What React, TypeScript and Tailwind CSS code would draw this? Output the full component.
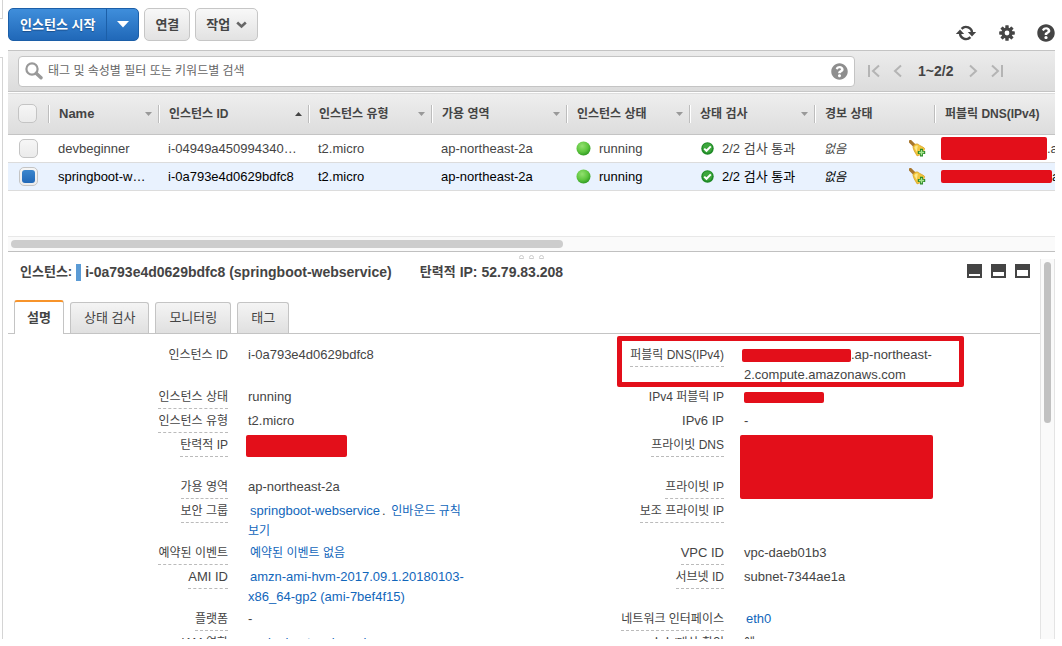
import { useState } from "react";
import type { ReactNode } from "react";
import { FaQuestionCircle } from "react-icons/fa";

type Instance = {
  name: string;
  id: string;
  type: string;
  zone: string;
  dns: ReactNode;
};

const INSTANCES: Instance[] = [
  {
    name: "devbeginner",
    id: "i-04949a450994340…",
    type: "t2.micro",
    zone: "ap-northeast-2a",
    dns: (
      <>
        <Redacted className="h-[23px] w-[106px]" />
        .ap
      </>
    ),
  },
  {
    name: "springboot-webservice",
    id: "i-0a793e4d0629bdfc8",
    type: "t2.micro",
    zone: "ap-northeast-2a",
    dns: (
      <>
        <Redacted className="h-[13px] w-[111px]" />
        ap
      </>
    ),
  },
];

const COLUMNS: { label: string; width: string; size: string; sort?: "asc" | "none" }[] = [
  { label: "Name", width: "w-[110px]", size: "text-[13px]", sort: "none" },
  { label: "인스턴스 ID", width: "w-[150px]", size: "text-xs", sort: "asc" },
  { label: "인스턴스 유형", width: "w-[123px]", size: "text-xs", sort: "none" },
  { label: "가용 영역", width: "w-[135px]", size: "text-xs", sort: "none" },
  { label: "인스턴스 상태", width: "w-[123px]", size: "text-xs", sort: "none" },
  { label: "상태 검사", width: "w-[125px]", size: "text-xs", sort: "none" },
  { label: "경보 상태", width: "w-[120px]", size: "text-xs" },
  { label: "퍼블릭 DNS(IPv4)", width: "w-auto", size: "text-xs" },
];

const TABS = ["설명", "상태 검사", "모니터링", "태그"];

function Redacted({ className }: { className: string }) {
  return <span className={`inline-block shrink-0 rounded-[2px] bg-[#e30f1a] align-middle ${className}`} />;
}

function RefreshIcon() {
  return (
    <svg width="22" height="18" viewBox="0 0 22 18" fill="none">
      <path d="M6.6 4.900A6 6 0 0 1 17 9.200" stroke="#444" strokeWidth="2.400" />
      <path d="M15.400 13.100A6 6 0 0 1 5 8.800" stroke="#444" strokeWidth="2.400" />
      <path d="M.8 10 5 5.600 9.200 10Z" fill="#444" />
      <path d="M12.800 8 17 12.400 21.200 8Z" fill="#444" />
    </svg>
  );
}

function GearIcon() {
  return (
    <svg width="16" height="16" viewBox="-8 -8 16 16">
      {[0, 45, 90, 135].map((angle) => (
        <rect key={angle} x="-1.7" y="-7.8" width="3.4" height="15.6" rx=".6" fill="#444" transform={`rotate(${angle})`} />
      ))}
      <circle r="5.6" fill="#444" />
      <circle r="2.4" fill="#fff" />
    </svg>
  );
}

function SearchIcon() {
  return (
    <svg width="18" height="18" viewBox="0 0 18 18" fill="none" stroke="#999">
      <circle cx="7" cy="7" r="5.6" strokeWidth="2.2" />
      <path d="m11.4 11.4 4.6 4.4" strokeWidth="3.4" strokeLinecap="round" />
    </svg>
  );
}

function PageIcon({ bar, flip }: { bar?: boolean; flip?: boolean }) {
  return (
    <svg
      width={bar ? 12 : 9}
      height="14"
      viewBox={bar ? "0 0 12 14" : "3 0 9 14"}
      fill="none"
      stroke="#b4b4b4"
      strokeWidth="2"
      className={flip ? "rotate-180" : ""}
    >
      {bar && <path d="M1 1v12" />}
      <path d="m11 1.5-6 5.5 6 5.5" />
    </svg>
  );
}

function RunningIcon() {
  return (
    <svg width="15" height="15" viewBox="0 0 15 15" className="shrink-0">
      <defs>
        <radialGradient id="ball" cx=".4" cy=".32" r=".7">
          <stop offset="0" stopColor="#93e070" />
          <stop offset=".6" stopColor="#5fc63f" />
          <stop offset="1" stopColor="#2f9a22" />
        </radialGradient>
      </defs>
      <circle cx="7.5" cy="7.5" r="7" fill="url(#ball)" />
    </svg>
  );
}

function PassedIcon() {
  return (
    <svg width="13" height="13" viewBox="0 0 13 13" className="shrink-0">
      <circle cx="6.5" cy="6.5" r="6.2" fill="#1f8a27" />
      <circle cx="6.5" cy="6" r="4.8" fill="#3da63c" />
      <path d="m3.2 6.6 2.3 2.2 4.3-4.4" fill="none" stroke="#fff" strokeWidth="2" />
    </svg>
  );
}

function AlarmIcon() {
  return (
    <svg width="17" height="17" viewBox="0 0 17 17" className="shrink-0">
      <path d="M1.400 1.600 5.200 5.400" stroke="#a8762c" strokeWidth="3.400" strokeLinecap="round" />
      <path
        d="M4 7.200C4.400 4.800 7.200 3.200 9.400 4.400C10.800 6 13.600 6.400 15.600 8.400C15 12 11.600 15.400 8 15.800C7 13.400 4.600 11 4 7.200Z"
        fill="#f3c63d"
        stroke="#d79f22"
        strokeWidth=".8"
      />
      <path d="M5.400 7.800C6 6 7.600 5.200 8.800 5.800L7.800 12Z" fill="#fde88c" />
      <path d="M11 8.800h3v2.200h2.200v3h-2.200v2.400H11v-2.400H8.800v-3H11Z" fill="#2f8a2b" />
      <path d="M12.500 10v5.200M10 12.500h5.100" stroke="#a5e58c" strokeWidth="1.300" />
    </svg>
  );
}

function PaneIcon({ top }: { top: number }) {
  return (
    <svg width="15" height="14" viewBox="0 0 15 14">
      <path d="M0 0h15v14H0Z" fill="#444" />
      <path d={`M2 ${top}h11V12H2Z`} fill="#fff" />
    </svg>
  );
}

function CheckBox({ label, checked, onChange }: { label: string; checked?: boolean; onChange?: () => void }) {
  return (
    <label className="grid size-[19px] place-items-center">
      <input
        type="checkbox"
        aria-label={label}
        checked={checked ?? false}
        onChange={onChange}
        className="peer col-start-1 row-start-1 size-[19px] appearance-none rounded-[5px] border border-[#c4c4c4] bg-linear-to-b from-[#f6f6f6] to-[#ebebeb]"
      />
      <span className="pointer-events-none col-start-1 row-start-1 hidden size-[13px] rounded-[3px] bg-linear-to-b from-[#3b86cd] to-[#2068b8] peer-checked:block" />
    </label>
  );
}

function Label({ children, plain, latin }: { children: ReactNode; plain?: boolean; latin?: boolean }) {
  return (
    <dt className="text-right">
      <span
        className={`inline-block h-[22px] align-top leading-5 whitespace-nowrap ${latin ? "text-[13px]" : "text-xs"} ${
          plain ? "" : "border-b border-dashed border-[#bbb]"
        }`}
      >
        {children}
      </span>
    </dt>
  );
}

function Link({ children, korean }: { children: ReactNode; korean?: boolean }) {
  return (
    <a href="#" className={`px-0.5 text-[#1166bb] hover:underline ${korean ? "text-xs leading-5" : ""}`}>
      {children}
    </a>
  );
}

function Toolbar() {
  const grey =
    "flex h-[33px] items-center rounded-[5px] border border-[#c6c6c6] bg-linear-to-b from-[#f8f8f8] to-[#e2e2e2] px-2.5";
  return (
    <div className="flex h-[50px] items-start pt-2 text-[13px] font-bold">
      <div className="flex h-[33px] rounded-[5px] border border-[#1c5fa8] bg-linear-to-b from-[#3f8edb] to-[#2068b8] text-white">
        <button className="px-[11px] text-shadow-[0_1px_1px_#1a4f8c]">인스턴스 시작</button>
        <button aria-label="시작 옵션" className="grid w-8 place-items-center border-l border-[#1c5fa8]">
          <svg width="12" height="7" viewBox="0 0 12 7">
            <path d="M0 0h12L6 6.500Z" fill="#fff" />
          </svg>
        </button>
      </div>
      <button className={`${grey} ml-[5px]`}>연결</button>
      <button className={`${grey} ml-[5px] gap-1.5`}>
        작업
        <svg width="11" height="8" viewBox="0 0 11 8" fill="none" stroke="#666" strokeWidth="2.600">
          <path d="m1.200 1.500 4.300 4 4.300-4" />
        </svg>
      </button>
      <div className="ml-auto flex items-center gap-[22px] pt-4">
        <button aria-label="새로 고침">
          <RefreshIcon />
        </button>
        <button aria-label="설정">
          <GearIcon />
        </button>
        <button aria-label="도움말">
          <FaQuestionCircle size={18} color="#444" />
        </button>
      </div>
    </div>
  );
}

function FilterBar() {
  return (
    <div className="flex h-[42px] items-center border-y border-[#c4c4c4] bg-linear-to-b from-[#ececec] to-[#dcdcdc] pl-2.5">
      <div className="flex h-[31px] flex-1 items-center gap-[5px] rounded-[4px] border border-[#c4c4c4] bg-white px-1.5">
        <SearchIcon />
        <input
          aria-label="필터"
          placeholder="태그 및 속성별 필터 또는 키워드별 검색"
          className="min-w-0 flex-1 text-xs outline-none placeholder:text-[#666]"
        />
        <FaQuestionCircle size={17} color="#8e8e8e" />
      </div>
      <div className="flex w-[200px] items-center pl-[13px] text-sm font-bold">
        <button aria-label="처음">
          <PageIcon bar />
        </button>
        <button aria-label="이전" className="ml-[13px]">
          <PageIcon />
        </button>
        <span className="mx-4">1~2/2</span>
        <button aria-label="다음" className="mr-[13px]">
          <PageIcon flip />
        </button>
        <button aria-label="마지막">
          <PageIcon bar flip />
        </button>
      </div>
    </div>
  );
}

function InstanceTable({ selected, onSelect }: { selected: number; onSelect: (index: number) => void }) {
  const cell = "truncate px-2.5";
  return (
    <table className="w-full table-fixed border-collapse text-[13px]">
      <thead>
        <tr className="h-[42px] border-t border-b border-t-white border-b-[#c4c4c4] bg-linear-to-b from-[#eeeeee] to-[#dddddd]">
          <th className="w-10 pl-2.5">
            <CheckBox label="모두 선택" />
          </th>
          {COLUMNS.map((column) => (
            <th key={column.label} className={`p-0 text-left font-bold ${column.width}`}>
              <div className="flex h-[18px] items-center border-l border-[#bdbdbd]">
                <div
                  className={`flex h-full flex-1 items-center justify-between border-l border-white pr-1.5 pl-[9px] whitespace-nowrap ${column.size}`}
                >
                  {column.label}
                  {column.sort && (
                    <svg width="7" height="4" viewBox="0 0 7 4">
                      <path
                        d={column.sort === "asc" ? "M0 4h7L3.500 0Z" : "M0 0h7L3.500 4Z"}
                        fill={column.sort === "asc" ? "#444" : "#999"}
                      />
                    </svg>
                  )}
                </div>
              </div>
            </th>
          ))}
        </tr>
      </thead>
      <tbody>
        {INSTANCES.map((instance, index) => (
          <tr
            key={instance.id}
            className={`h-7 border-b border-[#dcdcdc] ${index === selected ? "bg-[#e9f2fe] text-black" : ""}`}
          >
            <td className="p-0 pl-[11px]">
              <CheckBox label={instance.name} checked={index === selected} onChange={() => onSelect(index)} />
            </td>
            <td className={cell}>{instance.name}</td>
            <td className={cell}>{instance.id}</td>
            <td className={cell}>{instance.type}</td>
            <td className={cell}>{instance.zone}</td>
            <td className={cell}>
              <div className="flex items-center gap-2">
                <RunningIcon />
                running
              </div>
            </td>
            <td className="p-0 pl-3">
              <div className="flex items-center gap-2 whitespace-nowrap">
                <PassedIcon />
                2/2 검사 통과
              </div>
            </td>
            <td className="p-0 pr-2 pl-2.5">
              <div className="flex items-center justify-between text-xs italic">
                없음
                <AlarmIcon />
              </div>
            </td>
            <td className="p-0 pl-[7px]">
              <div className="flex items-center overflow-hidden whitespace-nowrap">{instance.dns}</div>
            </td>
          </tr>
        ))}
      </tbody>
    </table>
  );
}

function Details() {
  return (
    <dl className="relative grid grid-cols-[220px_236px_220px_minmax(0,1fr)] gap-x-5 gap-y-0.5 pt-[11px] text-[13px] leading-5 break-keep">
      <div className="pointer-events-none absolute top-0.5 left-[609px] h-[51px] w-[347px] rounded-[2px] border-5 border-[#e30f1a]" />

      <Label plain>인스턴스 ID</Label>
      <dd>i-0a793e4d0629bdfc8</dd>
      <Label>퍼블릭 DNS(IPv4)</Label>
      <dd>
        <Redacted className="-ml-0.5 h-[13px] w-[109px]" />
        .ap-northeast-
        <br />
        2.compute.amazonaws.com
      </dd>

      <Label>인스턴스 상태</Label>
      <dd>running</dd>
      <Label plain>IPv4 퍼블릭 IP</Label>
      <dd>
        <Redacted className="h-[11px] w-20" />
      </dd>

      <Label>인스턴스 유형</Label>
      <dd>t2.micro</dd>
      <Label plain latin>
        IPv6 IP
      </Label>
      <dd>-</dd>

      <Label>탄력적 IP</Label>
      <dd className="flex min-h-10 items-start">
        <Redacted className="-ml-0.5 h-[22px] w-[101px]" />
      </dd>
      <Label>프라이빗 DNS</Label>
      <dd className="row-span-2 flex">
        <Redacted className="-ml-1 h-16 w-[193px]" />
      </dd>

      <Label>가용 영역</Label>
      <dd>ap-northeast-2a</dd>
      <Label>프라이빗 IP</Label>

      <Label>보안 그룹</Label>
      <dd>
        <Link>springboot-webservice</Link>.{" "}
        <Link korean>인바운드 규칙 보기</Link>
      </dd>
      <Label>보조 프라이빗 IP</Label>
      <dd />

      <Label>예약된 이벤트</Label>
      <dd>
        <Link korean>예약된 이벤트 없음</Link>
      </dd>
      <Label latin>VPC ID</Label>
      <dd>vpc-daeb01b3</dd>

      <Label latin>AMI ID</Label>
      <dd>
        <Link>amzn-ami-hvm-2017.09.1.20180103-x86_64-gp2 (ami-7bef4f15)</Link>
      </dd>
      <Label>서브넷 ID</Label>
      <dd>subnet-7344ae1a</dd>

      <Label>플랫폼</Label>
      <dd>-</dd>
      <Label>네트워크 인터페이스</Label>
      <dd>
        <Link>eth0</Link>
      </dd>

      <Label>IAM 역할</Label>
      <dd>
        <Link>springboot-webservice</Link>
      </dd>
      <Label>소스/대상 확인</Label>
      <dd className="text-xs leading-5">예</dd>
    </dl>
  );
}

function DetailPane() {
  const [tab, setTab] = useState(0);
  return (
    <section className="flex min-h-0 flex-1 flex-col">
      <div className="flex h-[7px] items-end justify-center gap-[5px]">
        {[0, 1, 2].map((dot) => (
          <span key={dot} className="h-1 w-[5px] rounded-t-sm border border-[#ccc]" />
        ))}
      </div>
      <div className="flex min-h-0 flex-1">
        <div className="min-w-0 flex-1 overflow-hidden">
          <header className="flex h-[41px] items-start justify-between pt-1 pr-2.5 pl-3">
            <h2 className="flex items-center text-sm leading-[18px] font-bold">
              <span className="text-[13px]">인스턴스:</span>
              <span className="mx-1 h-[17px] w-[5px] bg-[#5b9bd5]" />
              <span>i-0a793e4d0629bdfc8 (springboot-webservice)</span>
              <span className="ml-7 text-[13px]">탄력적</span>
              <span className="ml-1">IP: 52.79.83.208</span>
            </h2>
            <div className="flex gap-[9px] pt-px">
              <button aria-label="작게">
                <PaneIcon top={10} />
              </button>
              <button aria-label="중간">
                <PaneIcon top={8} />
              </button>
              <button aria-label="크게">
                <PaneIcon top={6} />
              </button>
            </div>
          </header>
          <div role="tablist" className="flex h-[34px] items-end gap-1.5 border-b border-[#c4c4c4] pl-1.5 text-[13px]">
            {TABS.map((label, index) => (
              <button
                key={label}
                role="tab"
                aria-selected={tab === index}
                onClick={() => setTab(index)}
                className={
                  tab === index
                    ? "-mb-px h-[34px] rounded-t-[3px] border-x border-t-2 border-x-[#c4c4c4] border-t-[#f7942b] bg-white px-3 font-bold"
                    : "h-[31px] rounded-t-[3px] border border-b-0 border-[#c4c4c4] bg-linear-to-b from-[#f4f4f4] to-[#e0e0e0] px-[13px]"
                }
              >
                {label}
              </button>
            ))}
          </div>
          <Details />
        </div>
        <div className="w-[15px] border-x border-[#e4e4e4] bg-[#fafafa] px-[3px] pt-[3px]">
          <div className="h-[161px] rounded-full bg-[#c1c1c1]" />
        </div>
      </div>
    </section>
  );
}

export default function App() {
  const [selected, setSelected] = useState(1);
  return (
    <div className="flex h-screen overflow-hidden bg-white pr-[7px] pb-[7px] font-['Liberation_Sans','Noto_Sans_CJK_KR',sans-serif] text-[#444]">
      <aside className="flex w-2 shrink-0 flex-col gap-[38px] pr-[5px]">
        <div className="h-[19px] border-r border-b border-[#d4d4d4]" />
        <div className="flex-1 border-t border-r border-[#d4d4d4]" />
      </aside>
      <main className="flex min-w-0 flex-1 flex-col overflow-hidden">
        <Toolbar />
        <FilterBar />
        <div className="h-[144px] shrink-0 overflow-hidden">
          <InstanceTable selected={selected} onSelect={setSelected} />
        </div>
        <div className="h-4 shrink-0 border-t border-b border-t-[#e8e8e8] border-b-[#c0c0c0] bg-[#fafafa] px-[3px] pt-[3px]">
          <div className="h-2 w-[53%] rounded-full bg-[#cdcdcd]" />
        </div>
        <DetailPane />
      </main>
    </div>
  );
}
